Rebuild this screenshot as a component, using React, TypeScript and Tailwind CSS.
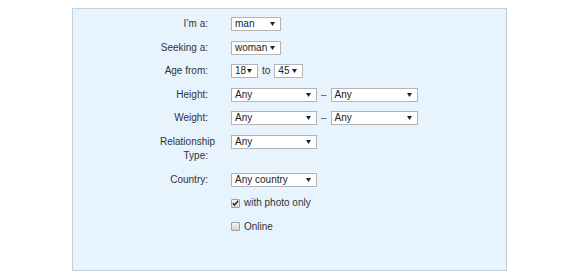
import type { ReactNode } from "react";

function Caret() {
  return (
    <svg width="5" height="4" viewBox="0 0 5 4" className="shrink-0">
      <path d="M0 0h5L2.5 4z" fill="#222" />
    </svg>
  );
}

function Select({ value, width }: { value: string; width: string }) {
  return (
    <div
      className={`flex h-[14px] items-center justify-between border border-[#b4b4b4] bg-white pl-[3px] pr-[5px] text-[#222] ${width}`}
    >
      <span className="leading-none">{value}</span>
      <Caret />
    </div>
  );
}

function Row({ label, children }: { label: ReactNode; children?: ReactNode }) {
  return (
    <>
      <div className="flex justify-end">
        <div className="w-[48px] text-right leading-[14px]">{label}</div>
      </div>
      <div className="flex h-[14px] items-center">{children}</div>
    </>
  );
}

function Checkbox({ checked, label }: { checked?: boolean; label: string }) {
  return (
    <div className="flex h-[14px] items-center gap-[4px]">
      <div className="flex h-[9px] w-[9px] items-center justify-center rounded-[1px] border border-[#a0a0a0] bg-gradient-to-b from-[#f4f4f4] to-[#d6d6d6]">
        {checked && (
          <svg width="7" height="6" viewBox="0 0 7 6">
            <path d="M0.8 3.2 2.6 5 6.2 0.8" fill="none" stroke="#222" strokeWidth="1.4" />
          </svg>
        )}
      </div>
      <span className="leading-none text-[#333]">{label}</span>
    </div>
  );
}

export default function App() {
  return (
    <div className="h-[277px] w-[586px] bg-white font-['Liberation_Sans',Arial,sans-serif] text-[10px] text-[#333]">
      <div className="ml-[72px] pt-[8px]">
        <div className="h-[263px] w-[435px] border border-[#c3d0da] bg-[#e7f3fd] pt-[8px]">
          <div className="grid grid-cols-[135px_1fr] gap-x-[23px] gap-y-[9.6px]">
            <Row label="I’m a:">
              <Select value="man" width="w-[50px]" />
            </Row>
            <Row label="Seeking a:">
              <Select value="woman" width="w-[50px]" />
            </Row>
            <Row label="Age from:">
              <Select value="18" width="w-[27px]" />
              <span className="mx-[4px] leading-none">to</span>
              <Select value="45" width="w-[29px]" />
            </Row>
            <Row label="Height:">
              <Select value="Any" width="w-[86px]" />
              <span className="mx-[4px] leading-none text-[#555]">–</span>
              <Select value="Any" width="w-[87px]" />
            </Row>
            <Row label="Weight:">
              <Select value="Any" width="w-[86px]" />
              <span className="mx-[4px] leading-none text-[#555]">–</span>
              <Select value="Any" width="w-[87px]" />
            </Row>
            <div className="flex justify-end">
              <div className="w-[48px] text-right leading-[14px]">Relationship Type:</div>
            </div>
            <div className="flex h-[14px] items-center">
              <Select value="Any" width="w-[86px]" />
            </div>
            <Row label="Country:">
              <Select value="Any country" width="w-[86px]" />
            </Row>
            <div />
            <Checkbox checked label="with photo only" />
            <div />
            <Checkbox label="Online" />
          </div>
        </div>
      </div>
    </div>
  );
}
